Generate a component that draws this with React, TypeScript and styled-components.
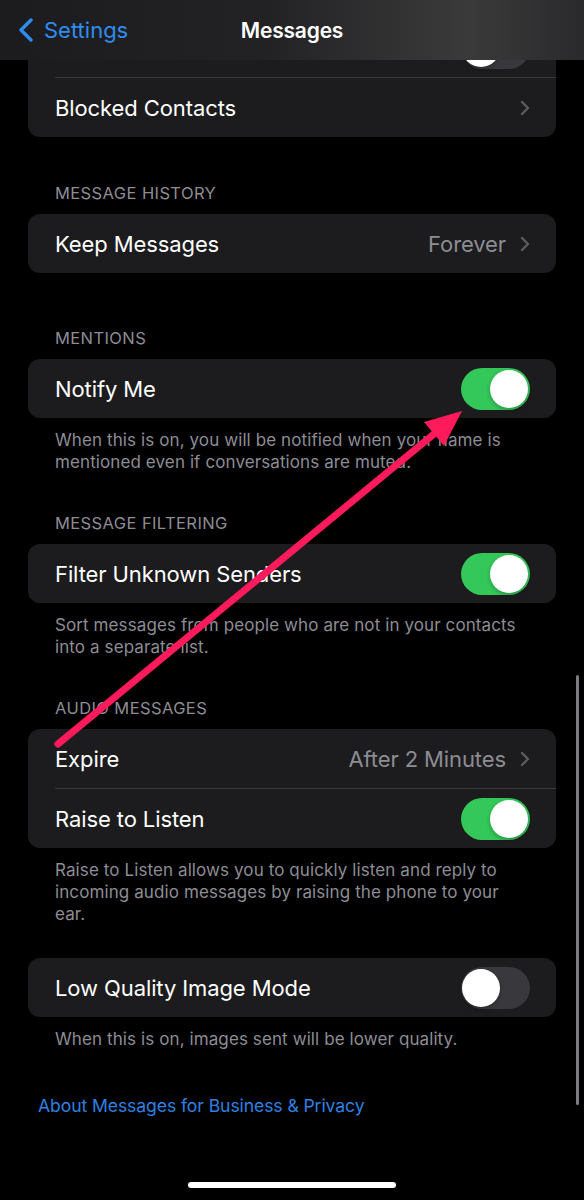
import React from "react";
import styled, { createGlobalStyle } from "styled-components";

const GlobalStyle = createGlobalStyle`
  html, body {
    margin: 0;
    padding: 0;
    background: #000;
  }
  body {
    font-family: Inter, "Noto Sans", "Liberation Sans", sans-serif;
    -webkit-font-smoothing: antialiased;
  }
`;

const Screen = styled.div`
  position: relative;
  width: 584px;
  height: 1200px;
  overflow: hidden;
  background: #000;
`;

const NavBar = styled.div`
  position: absolute;
  top: 0;
  left: 0;
  right: 0;
  height: 60px;
  z-index: 2;
  display: grid;
  grid-template-columns: 1fr auto 1fr;
  align-items: center;
  background: linear-gradient(90deg, #1c1c1e 0%, #222224 45%, #3a3a3b 80%, #2a2a2c 100%);
`;

const BackButton = styled.div`
  display: flex;
  align-items: center;
  gap: 10px;
  padding-left: 18px;
  color: #2f8cf2;
  font-size: 22px;
  letter-spacing: 0;
`;

const NavTitle = styled.div`
  color: #fff;
  font-size: 21px;
  font-weight: 600;
  letter-spacing: -0.2px;
`;

const Content = styled.div`
  display: flex;
  flex-direction: column;
  padding: 18px 28px 0;
`;

const Section = styled.section<{ $gap: number }>`
  display: flex;
  flex-direction: column;
  margin-top: ${(p) => p.$gap}px;
`;

const Header = styled.div`
  padding: 0 27px;
  margin-bottom: 11px;
  color: #8d8d93;
  font-size: 16.5px;
  line-height: 20px;
  letter-spacing: 0.4px;
  text-transform: uppercase;
`;

const Card = styled.div`
  background: #1c1c1e;
  border-radius: 12px;
  overflow: hidden;
`;

const Row = styled.div<{ $end?: boolean }>`
  display: flex;
  align-items: center;
  justify-content: ${(p) => (p.$end ? "flex-end" : "flex-start")};
  height: 59px;
  padding: 0 26px 0 27px;
`;

const Separator = styled.div`
  height: 1px;
  margin-left: 27px;
  background: #38383a;
`;

const Label = styled.div`
  flex: 1;
  color: #fff;
  font-size: 22px;
  letter-spacing: -0.1px;
`;

const Value = styled.div`
  color: #8d8d93;
  font-size: 22px;
  letter-spacing: -0.1px;
  margin-right: 14px;
`;

const Footer = styled.div`
  padding: 0 27px;
  margin-top: 11px;
  color: #8d8d93;
  font-size: 17px;
  line-height: 22px;
  letter-spacing: 0.1px;
`;

const Link = styled.div`
  margin-top: 45px;
  padding-left: 10px;
  color: #2f80e4;
  font-size: 17.6px;
  line-height: 22px;
  letter-spacing: -0.1px;
`;

const Track = styled.div<{ $on: boolean }>`
  position: relative;
  width: 69px;
  height: 42px;
  border-radius: 21px;
  background: ${(p) => (p.$on ? "#34c759" : "#39393d")};
  flex-shrink: 0;
`;

const Knob = styled.div<{ $on: boolean }>`
  position: absolute;
  top: 2px;
  left: ${(p) => (p.$on ? "29px" : "1px")};
  width: 38px;
  height: 38px;
  border-radius: 50%;
  background: #fff;
  box-shadow: 0 2px 4px rgba(0, 0, 0, 0.25);
`;

const ScrollIndicator = styled.div`
  position: absolute;
  top: 675px;
  left: 576px;
  width: 3px;
  height: 430px;
  border-radius: 2px;
  background: #7c7c80;
`;

const HomeIndicator = styled.div`
  position: absolute;
  bottom: 12px;
  left: 188px;
  width: 208px;
  height: 6px;
  border-radius: 3px;
  background: #fff;
`;

const Annotation = styled.svg`
  position: absolute;
  inset: 0;
  z-index: 3;
  pointer-events: none;
`;

const Toggle = ({ on }: { on: boolean }) => (
  <Track $on={on}>
    <Knob $on={on} />
  </Track>
);

const Chevron = () => (
  <svg width="10" height="16" viewBox="0 0 10 16">
    <path d="M2 2 L8 8 L2 14" fill="none" stroke="#5c5c60" strokeWidth="2.4" strokeLinecap="round" strokeLinejoin="round" />
  </svg>
);

const BackChevron = () => (
  <svg width="16" height="24" viewBox="0 0 16 24">
    <path d="M13 2 L3 12 L13 22" fill="none" stroke="#2f8cf2" strokeWidth="3.4" strokeLinecap="round" strokeLinejoin="round" />
  </svg>
);

export default function App() {
  return (
    <>
      <GlobalStyle />
      <Screen>
        <NavBar>
          <BackButton>
            <BackChevron />
            Settings
          </BackButton>
          <NavTitle>Messages</NavTitle>
          <div />
        </NavBar>

        <Content>
          <Section $gap={0}>
            <Card>
              {/* row scrolled under the nav bar: only its switch peeks out */}
              <Row $end>
                <Toggle on={false} />
              </Row>
              <Separator />
              <Row>
                <Label>Blocked Contacts</Label>
                <Chevron />
              </Row>
            </Card>
          </Section>

          <Section $gap={46}>
            <Header>Message History</Header>
            <Card>
              <Row>
                <Label>Keep Messages</Label>
                <Value>Forever</Value>
                <Chevron />
              </Row>
            </Card>
          </Section>

          <Section $gap={55}>
            <Header>Mentions</Header>
            <Card>
              <Row>
                <Label>Notify Me</Label>
                <Toggle on />
              </Row>
            </Card>
            <Footer>
              When this is on, you will be notified when your name is
              <br />
              mentioned even if conversations are muted.
            </Footer>
          </Section>

          <Section $gap={40}>
            <Header>Message Filtering</Header>
            <Card>
              <Row>
                <Label>Filter Unknown Senders</Label>
                <Toggle on />
              </Row>
            </Card>
            <Footer>
              Sort messages from people who are not in your contacts
              <br />
              into a separate list.
            </Footer>
          </Section>

          <Section $gap={40}>
            <Header>Audio Messages</Header>
            <Card>
              <Row>
                <Label>Expire</Label>
                <Value>After 2 Minutes</Value>
                <Chevron />
              </Row>
              <Separator />
              <Row>
                <Label>Raise to Listen</Label>
                <Toggle on />
              </Row>
            </Card>
            <Footer>
              Raise to Listen allows you to quickly listen and reply to
              <br />
              incoming audio messages by raising the phone to your
              <br />
              ear.
            </Footer>
          </Section>

          <Section $gap={33}>
            <Card>
              <Row>
                <Label>Low Quality Image Mode</Label>
                <Toggle on={false} />
              </Row>
            </Card>
            <Footer>When this is on, images sent will be lower quality.</Footer>
          </Section>

          <Link>About Messages for Business &amp; Privacy</Link>
        </Content>

        <ScrollIndicator />
        <HomeIndicator />

        <Annotation width="584" height="1200" viewBox="0 0 584 1200">
          <line x1="58" y1="744" x2="440" y2="429" stroke="#ff1a5c" strokeWidth="7" strokeLinecap="round" />
          <polygon points="462,411 424,422 444,446" fill="#ff1a5c" />
        </Annotation>
      </Screen>
    </>
  );
}
